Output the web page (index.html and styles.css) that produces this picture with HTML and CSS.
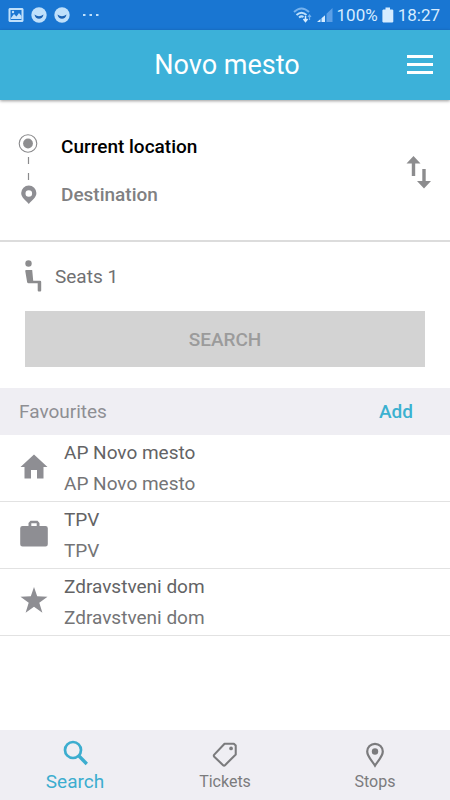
FILE: index.html
```html
<!DOCTYPE html>
<html lang="en">
<head>
  <meta charset="utf-8">
  <meta name="viewport" content="width=device-width, initial-scale=1">
  <title>Novo mesto</title>
  <link rel="stylesheet" href="styles.css">
</head>
<body>
  <div class="status">
    <div class="status-group status-notices">
      <svg width="16" height="16" viewBox="0 0 16 16" aria-hidden="true">
        <path fill="#bfe0fb" fill-rule="evenodd" d="M1.500 1h13l1 1v12l-1 1h-13l-1-1V2zM2.500 3v10h11V3z"/>
        <path fill="#bfe0fb" d="M3 11l3-4 2.500 2.500L11 6l2.500 3v3H3z"/>
        <circle cx="5" cy="5" r="1.200" fill="#bfe0fb"/>
      </svg>
      <svg width="16" height="16" viewBox="0 0 16 16" aria-hidden="true">
        <circle cx="8" cy="8" r="7.700" fill="#bfe0fb"/>
        <path d="M3.500 7.500q4.500 3.600 9 0c-.6 5.700-8.400 5.700-9 0z" fill="#1b62b4"/>
      </svg>
      <svg width="16" height="16" viewBox="0 0 16 16" aria-hidden="true">
        <circle cx="8" cy="8" r="7.700" fill="#bfe0fb"/>
        <path d="M3.500 7.500q4.500 3.600 9 0c-.6 5.700-8.400 5.700-9 0z" fill="#1b62b4"/>
      </svg>
      <svg class="status-more" width="16" height="16" viewBox="0 0 16 16" aria-hidden="true">
        <path fill="#bfe0fb" d="M0 7h2.500v2H0zM6.500 7H9v2H6.500zM13 7h2.500v2H13z"/>
      </svg>
    </div>
    <div class="status-group">
      <svg width="20" height="18" viewBox="0 0 20 18" aria-hidden="true">
        <g fill="none" stroke-width="2">
          <path d="M1 6q7.500-7 15 0" stroke="#75b2ee"/>
          <path d="M3.500 9q5-4.500 10 0" stroke="#bfe0fb"/>
          <path d="M6 11.500q2.500-2 4.500-.5" stroke="#bfe0fb"/>
        </g>
        <path d="M12.500 10v5M10.500 13l2 2.500 2-2.500" fill="none" stroke="#d6ecff" stroke-width="1.500"/>
        <path d="M16.500 14V9.500M15 11l1.500-2 1.500 2" fill="none" stroke="#75b2ee" stroke-width="1.200"/>
      </svg>
      <svg width="16" height="16" viewBox="0 0 16 16" aria-hidden="true">
        <path d="M0 15l3.500-3v3zM4.500 11.200L8 8.200V15H4.500z" fill="#d6ecff"/>
        <path d="M9.500 6.800L15.500 1v14h-6z" fill="#5c9fe6"/>
      </svg>
      <span class="status-text">100%</span>
      <svg width="12" height="16" viewBox="0 0 12 16" aria-hidden="true">
        <path d="M3.500 .5h4.500v2h2.500l.8.8v11.500l-.8.8H1.200l-.8-.8V3.300l.8-.8h2.300z" fill="#d6ecff"/>
      </svg>
      <span class="status-text">18:27</span>
    </div>
  </div>

  <header class="bar">
    <h1 class="bar-title">Novo mesto</h1>
    <button class="bar-menu" type="button" aria-label="Menu">
      <svg width="28" height="20" viewBox="0 0 28 20" aria-hidden="true">
        <path d="M1 0h26v3H1zM1 8h26v3H1zM1 16h26v3H1z" fill="#fff"/>
      </svg>
    </button>
  </header>

  <main class="content">
    <form class="trip">
      <div class="route">
        <svg class="route-line" width="20" height="74" viewBox="0 0 20 74" aria-hidden="true">
          <circle cx="10" cy="10.500" r="8.800" fill="none" stroke="#8a8a8c" stroke-width="1.100"/>
          <circle cx="10" cy="10.500" r="4.900" fill="#8e8e90"/>
          <path d="M10.500 24v7M10.500 40v7" stroke="#8a8a8c" stroke-width="1.200"/>
          <path fill="#8e8e93" fill-rule="evenodd" d="M10.800 52.500a7.600 7.600 0 0 1 7.600 7.600c0 4.600-4.400 7-7.600 10.900-3.200-3.900-7.600-6.300-7.600-10.900a7.600 7.600 0 0 1 7.600-7.600zm0 4.700a3.300 3.300 0 1 0 0 6.600 3.300 3.300 0 0 0 0-6.600z"/>
        </svg>
        <div class="route-fields">
          <input class="route-input" type="text" aria-label="From" value="Current location">
          <input class="route-input" type="text" aria-label="To" placeholder="Destination">
        </div>
        <button class="swap" type="button" aria-label="Swap">
          <svg width="26" height="38" viewBox="0 -5 26 38" aria-hidden="true">
            <path d="M7.500 0l7 7.500H9.200V20H5.800V7.500H.5zM18 32.500l-7-7.500h5.300V13h3.400v12H25z" fill="#8c8c8e"/>
          </svg>
        </button>
      </div>
      <div class="booking">
        <button class="seats" type="button">
          <svg width="18" height="32" viewBox="0 0 18 32" aria-hidden="true">
            <circle cx="3.500" cy="3.500" r="3.200" fill="#8c8c8e"/>
            <path d="M.8 10h6.400l1 10.700H15q1.200 0 1.200 1.200v8.600q0 1-1 1h-1.500q-1 0-1-1v-7.300H3.600q-1.300 0-1.500-1.300L.2 10.800z" fill="#8c8c8e"/>
          </svg>
          <span>Seats 1</span>
        </button>
        <button class="submit" type="submit" disabled>SEARCH</button>
      </div>
    </form>

    <section>
      <div class="fav-head">
        <h2 class="fav-title">Favourites</h2>
        <button class="fav-add" type="button">Add</button>
      </div>
      <ul class="fav-list">
        <li class="fav">
          <svg width="30" height="30" viewBox="0 2 30 30" aria-hidden="true">
            <path d="M15 3.500L28.500 16h-4v11.500h-6.500V19h-6v8.500H5.500V16h-4z" fill="#8e8e93"/>
          </svg>
          <div><p class="fav-name">AP Novo mesto</p><p class="fav-place">AP Novo mesto</p></div>
        </li>
        <li class="fav">
          <svg width="30" height="30" viewBox="0 1 30 30" aria-hidden="true">
            <path fill="#8e8e93" fill-rule="evenodd" d="M9.500 7V4l2-2.200h7l2 2.200v3h6q2.300 0 2.300 2.300v16q0 2.300-2.300 2.300h-23q-2.300 0-2.300-2.300v-16Q1.200 7 3.500 7zM12.300 7h5.400V4.300h-5.400z"/>
          </svg>
          <div><p class="fav-name">TPV</p><p class="fav-place">TPV</p></div>
        </li>
        <li class="fav">
          <svg width="30" height="30" viewBox="0 2 30 30" aria-hidden="true">
            <path d="M15 2l3.200 9.300 10.300.4-8.200 6.100 3.100 10-8.400-6-8.400 6 3.100-10-8.200-6.100 10.300-.4z" fill="#8e8e93"/>
          </svg>
          <div><p class="fav-name">Zdravstveni dom</p><p class="fav-place">Zdravstveni dom</p></div>
        </li>
      </ul>
    </section>
  </main>

  <nav class="tabs">
    <a class="tab tab-active" href="#search" aria-current="page">
      <svg width="28" height="28" viewBox="-1 0 28 28" aria-hidden="true">
        <circle cx="11" cy="10" r="8" fill="none" stroke="currentColor" stroke-width="2.700"/>
        <path d="M16.500 15.500l8.300 8.500" stroke="currentColor" stroke-width="3.400"/>
      </svg>
      <span>Search</span>
    </a>
    <a class="tab" href="#tickets">
      <svg width="28" height="28" viewBox="0 0 30 30" aria-hidden="true">
        <path d="M14.500 4h10l2 2v9.500L15 27q-1 1-2 0L3.500 18q-1-1.200 0-2.300z" fill="none" stroke="currentColor" stroke-width="2.200" stroke-linejoin="round"/>
        <circle cx="21.500" cy="9" r="2" fill="currentColor"/>
      </svg>
      <span>Tickets</span>
    </a>
    <a class="tab" href="#stops">
      <svg width="28" height="28" viewBox="0 -1 28 28" aria-hidden="true">
        <path d="M14 2.800a7.800 7.800 0 0 1 7.800 7.800c0 5-5 9.500-7.800 14-2.800-4.500-7.800-9-7.800-14A7.800 7.800 0 0 1 14 2.800z" fill="none" stroke="currentColor" stroke-width="2.200"/>
        <circle cx="14" cy="10.500" r="3.200" fill="currentColor"/>
      </svg>
      <span>Stops</span>
    </a>
  </nav>
</body>
</html>
```
FILE: styles.css
```css
* {
  box-sizing: border-box;
}

body {
  display: flex;
  flex-direction: column;
  min-height: 100vh;
  margin: 0;
  background: #fff;
  color: #707072;
  font-family: Roboto, "Liberation Sans", sans-serif;
  font-size: 19px;
}

button,
input {
  padding: 0;
  border: 0;
  background: none;
  color: inherit;
  font: inherit;
}

svg {
  display: block;
  flex: none;
}

h1,
h2,
p,
ul {
  margin: 0;
  padding: 0;
  font-weight: 400;
}

.status {
  display: flex;
  align-items: center;
  justify-content: space-between;
  height: 30px;
  padding: 0 10px 0 8px;
  background: #1976d2;
}

.status-group {
  display: flex;
  align-items: center;
  gap: 4px;
}

.status-notices {
  gap: 7px;
}

.status-more {
  margin-left: 6px;
}

.status-text {
  color: #d6ecff;
  font-size: 17px;
}

.bar {
  display: grid;
  grid-template-columns: 1fr auto 1fr;
  align-items: center;
  height: 70px;
  padding: 0 16px 0 20px;
  background: #3cb1d9;
  box-shadow: 0 1px 3px rgba(0, 0, 0, 0.4);
  color: #fff;
}

.bar-title {
  grid-column: 2;
  font-size: 27px;
}

.bar-menu {
  justify-self: end;
}

.content {
  flex: 1;
}

.route {
  display: flex;
  align-items: center;
  padding: 22px 18px;
  border-bottom: 2px solid #dcdcdc;
}

.route-fields {
  flex: 1;
  min-width: 0;
  margin-left: 23px;
}

.route-input {
  display: block;
  width: 100%;
  height: 48px;
  color: #000;
  font-weight: 500;
}

.route-input::placeholder {
  color: #808082;
  opacity: 1;
}

.booking {
  padding: 16px 25px 21px;
}

.seats {
  display: flex;
  align-items: center;
  gap: 12px;
  height: 36px;
  margin-bottom: 17px;
}

.submit {
  display: block;
  width: 100%;
  height: 56px;
  background: #d3d3d3;
  color: #9b9b9b;
  font-weight: 500;
}

.fav-head {
  display: flex;
  align-items: center;
  justify-content: space-between;
  height: 47px;
  padding: 0 37px 0 19px;
  background: #efeef3;
}

.fav-title {
  color: #8e8e93;
  font-size: 19px;
}

.fav-add {
  color: #3cb1d0;
  font-weight: 500;
}

.fav-list {
  list-style: none;
}

.fav {
  display: flex;
  align-items: center;
  gap: 15px;
  height: 67px;
  padding: 0 19px;
  border-bottom: 1px solid #e2e2e2;
}

.fav-name,
.fav-place {
  line-height: 31px;
}

.fav-name {
  color: #636365;
}

.fav-place {
  color: #747476;
}

.tabs {
  display: flex;
  height: 70px;
  background: #efeef3;
}

.tab {
  display: flex;
  flex: 1;
  flex-direction: column;
  align-items: center;
  padding-top: 10px;
  color: #7b7b7d;
  font-size: 16px;
  line-height: 28px;
  text-decoration: none;
}

.tab-active {
  color: #3cadcf;
  font-size: 19px;
}
```
